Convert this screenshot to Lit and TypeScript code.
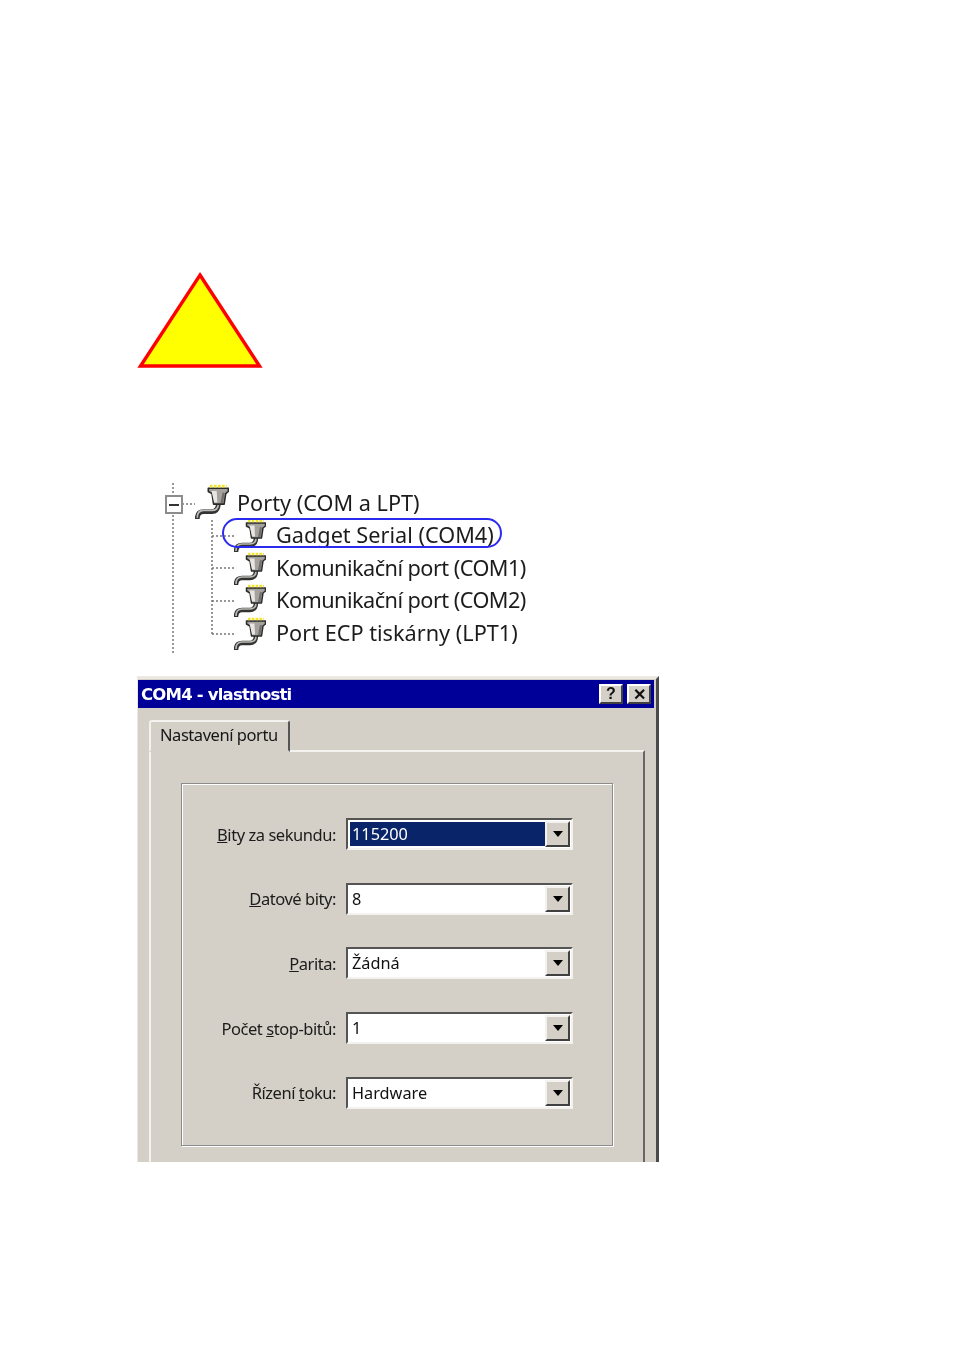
import { LitElement, html, css } from "lit";
import { customElement } from "lit/decorators.js";

const portIcon = (cls: string) => html`<svg class=${cls} viewBox="0 0 32 36" aria-hidden="true">
  <path d="M22 19c0 5-2 8-6 8H8c-4 0-6 2-6 7" fill="none" stroke="#333" stroke-width="4.500"/>
  <path d="M22 20c0 4-2 6-6 6H8c-4 0-6 2-6 7" fill="none" stroke="#bdbbb7" stroke-width="1.600"/>
  <path d="M12.500 5h19v3l-2.500 2-1.500 10h-10L16 10l-3.500-2z" fill="#a5a29e" stroke="#2a2a2a" stroke-width="1.500" stroke-linejoin="round"/>
  <path d="M15.500 7.500h5l.5 11h-3z" fill="#e8e6e2"/>
  <path d="M26 9l-2 10h2.500l1.500-9.500z" fill="#706e6a"/>
  <path d="M14 3h16" stroke="#f2e52c" stroke-width="2.600" stroke-dasharray="2.600 1.200"/>
</svg>`;

type Field = { pre: string; key: string; post: string; value: string; selected?: boolean };

const fields: Field[] = [
  { pre: "", key: "B", post: "ity za sekundu:", value: "115200", selected: true },
  { pre: "", key: "D", post: "atové bity:", value: "8" },
  { pre: "", key: "P", post: "arita:", value: "Žádná" },
  { pre: "Počet ", key: "s", post: "top-bitů:", value: "1" },
  { pre: "Řízení ", key: "t", post: "oku:", value: "Hardware" },
];

const ports = [
  { name: "Gadget Serial (COM4)", tight: false },
  { name: "Komunikační port (COM1)", tight: true },
  { name: "Komunikační port (COM2)", tight: true },
  { name: "Port ECP tiskárny (LPT1)", tight: false },
];

@customElement("app-root")
export class AppRoot extends LitElement {
  static styles = css`
    :host { display: block; width: 955px; height: 1350px; background: #fff; overflow: hidden; font-family: "Noto Sans", "Liberation Sans", sans-serif; }
    .page { display: flex; flex-direction: column; align-items: flex-start; padding: 270px 0 0 137px; }
    .warn { display: block; width: 126px; height: 100px; }

    .tree { position: relative; width: 400px; height: 170px; margin: 113px 0 0 24px; color: #1c1c1c; font-size: 21.700px; line-height: 32.700px; filter: blur(.35px); }
    .lines { position: absolute; left: 0; top: 0; width: 400px; height: 170px; }
    .root-row { display: flex; align-items: center; height: 38px; margin-left: 34px; gap: 8px; }
    .icon-lg { width: 34px; height: 38px; flex: none; }
    .root-row span { position: relative; top: 1px; }
    .kids { display: flex; flex-direction: column; margin: -2px 0 0 73px; }
    .kid { display: flex; align-items: center; height: 32.700px; gap: 10px; }
    .icon { width: 32px; height: 36px; flex: none; margin-top: 1px; }
    .kid .tight { letter-spacing: -.54px; }
    .ring { position: absolute; left: 61px; top: 35px; width: 276px; height: 26px; border: 2px solid #2a2af0; border-radius: 15px; }
    .box { position: absolute; left: 4px; top: 12px; width: 14px; height: 15px; border: 2px solid #8c8c8c; background: #fff; display: flex; align-items: center; justify-content: center; }
    .box i { display: block; width: 10px; height: 2px; background: #333; }

    .dialog { width: 522px; height: 486px; overflow: hidden; box-sizing: border-box; margin-top: 23px; background: #d4d0c8; border-top: 3px solid #ece9e2; border-right: 3px solid #4a4a4a; border-left: 1px solid #ece9e2; padding: 1px 2px 0 0; filter: blur(.3px); }
    .title { display: flex; align-items: center; justify-content: space-between; height: 28px; background: #000099; color: #fff; padding: 0 3px; font: 700 16.500px "DejaVu Sans", sans-serif; letter-spacing: -.8px; }
    .btns { display: flex; gap: 4px; }
    .btn { width: 24px; height: 20px; box-sizing: border-box; background: #d4d0c8; border: 2px solid; border-color: #fff #404040 #404040 #fff; color: #111; display: flex; align-items: center; justify-content: center; font: 700 16px "Liberation Sans", sans-serif; letter-spacing: 0; }
    .body { padding: 12px 0 0 11px; }
    .tabs { display: flex; }
    .tab { width: 141px; height: 32px; box-sizing: border-box; border: 2px solid; border-color: #f4f2ee #555 transparent #f4f2ee; border-radius: 3px 3px 0 0; padding-left: 9px; font-size: 16.500px; letter-spacing: -.45px; line-height: 26px; color: #161616; margin-bottom: -2px; background: #d4d0c8; position: relative; z-index: 1; }
    .panel { width: 496px; height: 420px; box-sizing: border-box; border: 2px solid; border-color: #f4f2ee #666 transparent #f4f2ee; padding: 31px 0 0 30px; }
    .group { width: 432px; height: 363px; box-sizing: border-box; border: 1px solid #8c8c8c; box-shadow: inset 1px 1px #fff, 1px 1px #fff; padding: 34px 0 0; display: flex; flex-direction: column; gap: 32.700px; }
    .row { display: flex; align-items: center; justify-content: flex-end; gap: 10px; height: 32px; padding-right: 39px; }
    .label { font-size: 16.500px; letter-spacing: -.45px; color: #1c1c1c; white-space: nowrap; }
    .combo { width: 227px; height: 32px; flex: none; box-sizing: border-box; border: 2px solid; border-color: #555 #f4f2ee #f4f2ee #555; background: #fff; display: flex; align-items: stretch; padding: 1px; }
    .value { flex: 1; padding-left: 3px; font-size: 16.300px; line-height: 27px; color: #111; }
    .value.sel { background: #0a246a; color: #fff; margin: 1px 0 1px 1px; padding-left: 2px; line-height: 25px; }
    .arrow { width: 25px; flex: none; box-sizing: border-box; background: #d4d0c8; border: 2px solid; border-color: #f4f2ee #404040 #404040 #f4f2ee; display: flex; align-items: center; justify-content: center; }
    .arrow i { width: 0; height: 0; border: 5px solid transparent; border-top: 6px solid #000; border-bottom: 0; }
  `;

  render() {
    return html`<div class="page">
      <svg class="warn" viewBox="0 0 126 100" aria-hidden="true">
        <path d="M63 5 L122.500 96 H3.500 Z" fill="#ffff00" stroke="#ff0000" stroke-width="3.400"/>
      </svg>

      <div class="tree">
        <svg class="lines" viewBox="0 0 400 170" aria-hidden="true">
          <g stroke="#777" stroke-width="1.500" stroke-dasharray="2 2" fill="none">
            <path d="M12 0V170"/>
            <path d="M21 21H34"/>
            <path d="M51 37V152"/>
            <path d="M51 53H74M51 85H74M51 118H74M51 151H74"/>
          </g>
        </svg>
        <div class="box"><i></i></div>
        <div class="root-row">${portIcon("icon-lg")}<span>Porty (COM a LPT)</span></div>
        <div class="kids">
          ${ports.map((p) => html`<div class="kid">${portIcon("icon")}<span class=${p.tight ? "tight" : ""}>${p.name}</span></div>`)}
        </div>
        <div class="ring"></div>
      </div>

      <div class="dialog">
        <div class="title">
          <span>COM4 - vlastnosti</span>
          <div class="btns"><div class="btn">?</div><div class="btn">✕</div></div>
        </div>
        <div class="body">
          <div class="tabs"><div class="tab">Nastavení portu</div></div>
          <div class="panel">
            <div class="group">
              ${fields.map((f) => html`<div class="row">
                <span class="label">${f.pre}<u>${f.key}</u>${f.post}</span>
                <div class="combo">
                  <div class="value ${f.selected ? "sel" : ""}">${f.value}</div>
                  <div class="arrow"><i></i></div>
                </div>
              </div>`)}
            </div>
          </div>
        </div>
      </div>
    </div>`;
  }
}
